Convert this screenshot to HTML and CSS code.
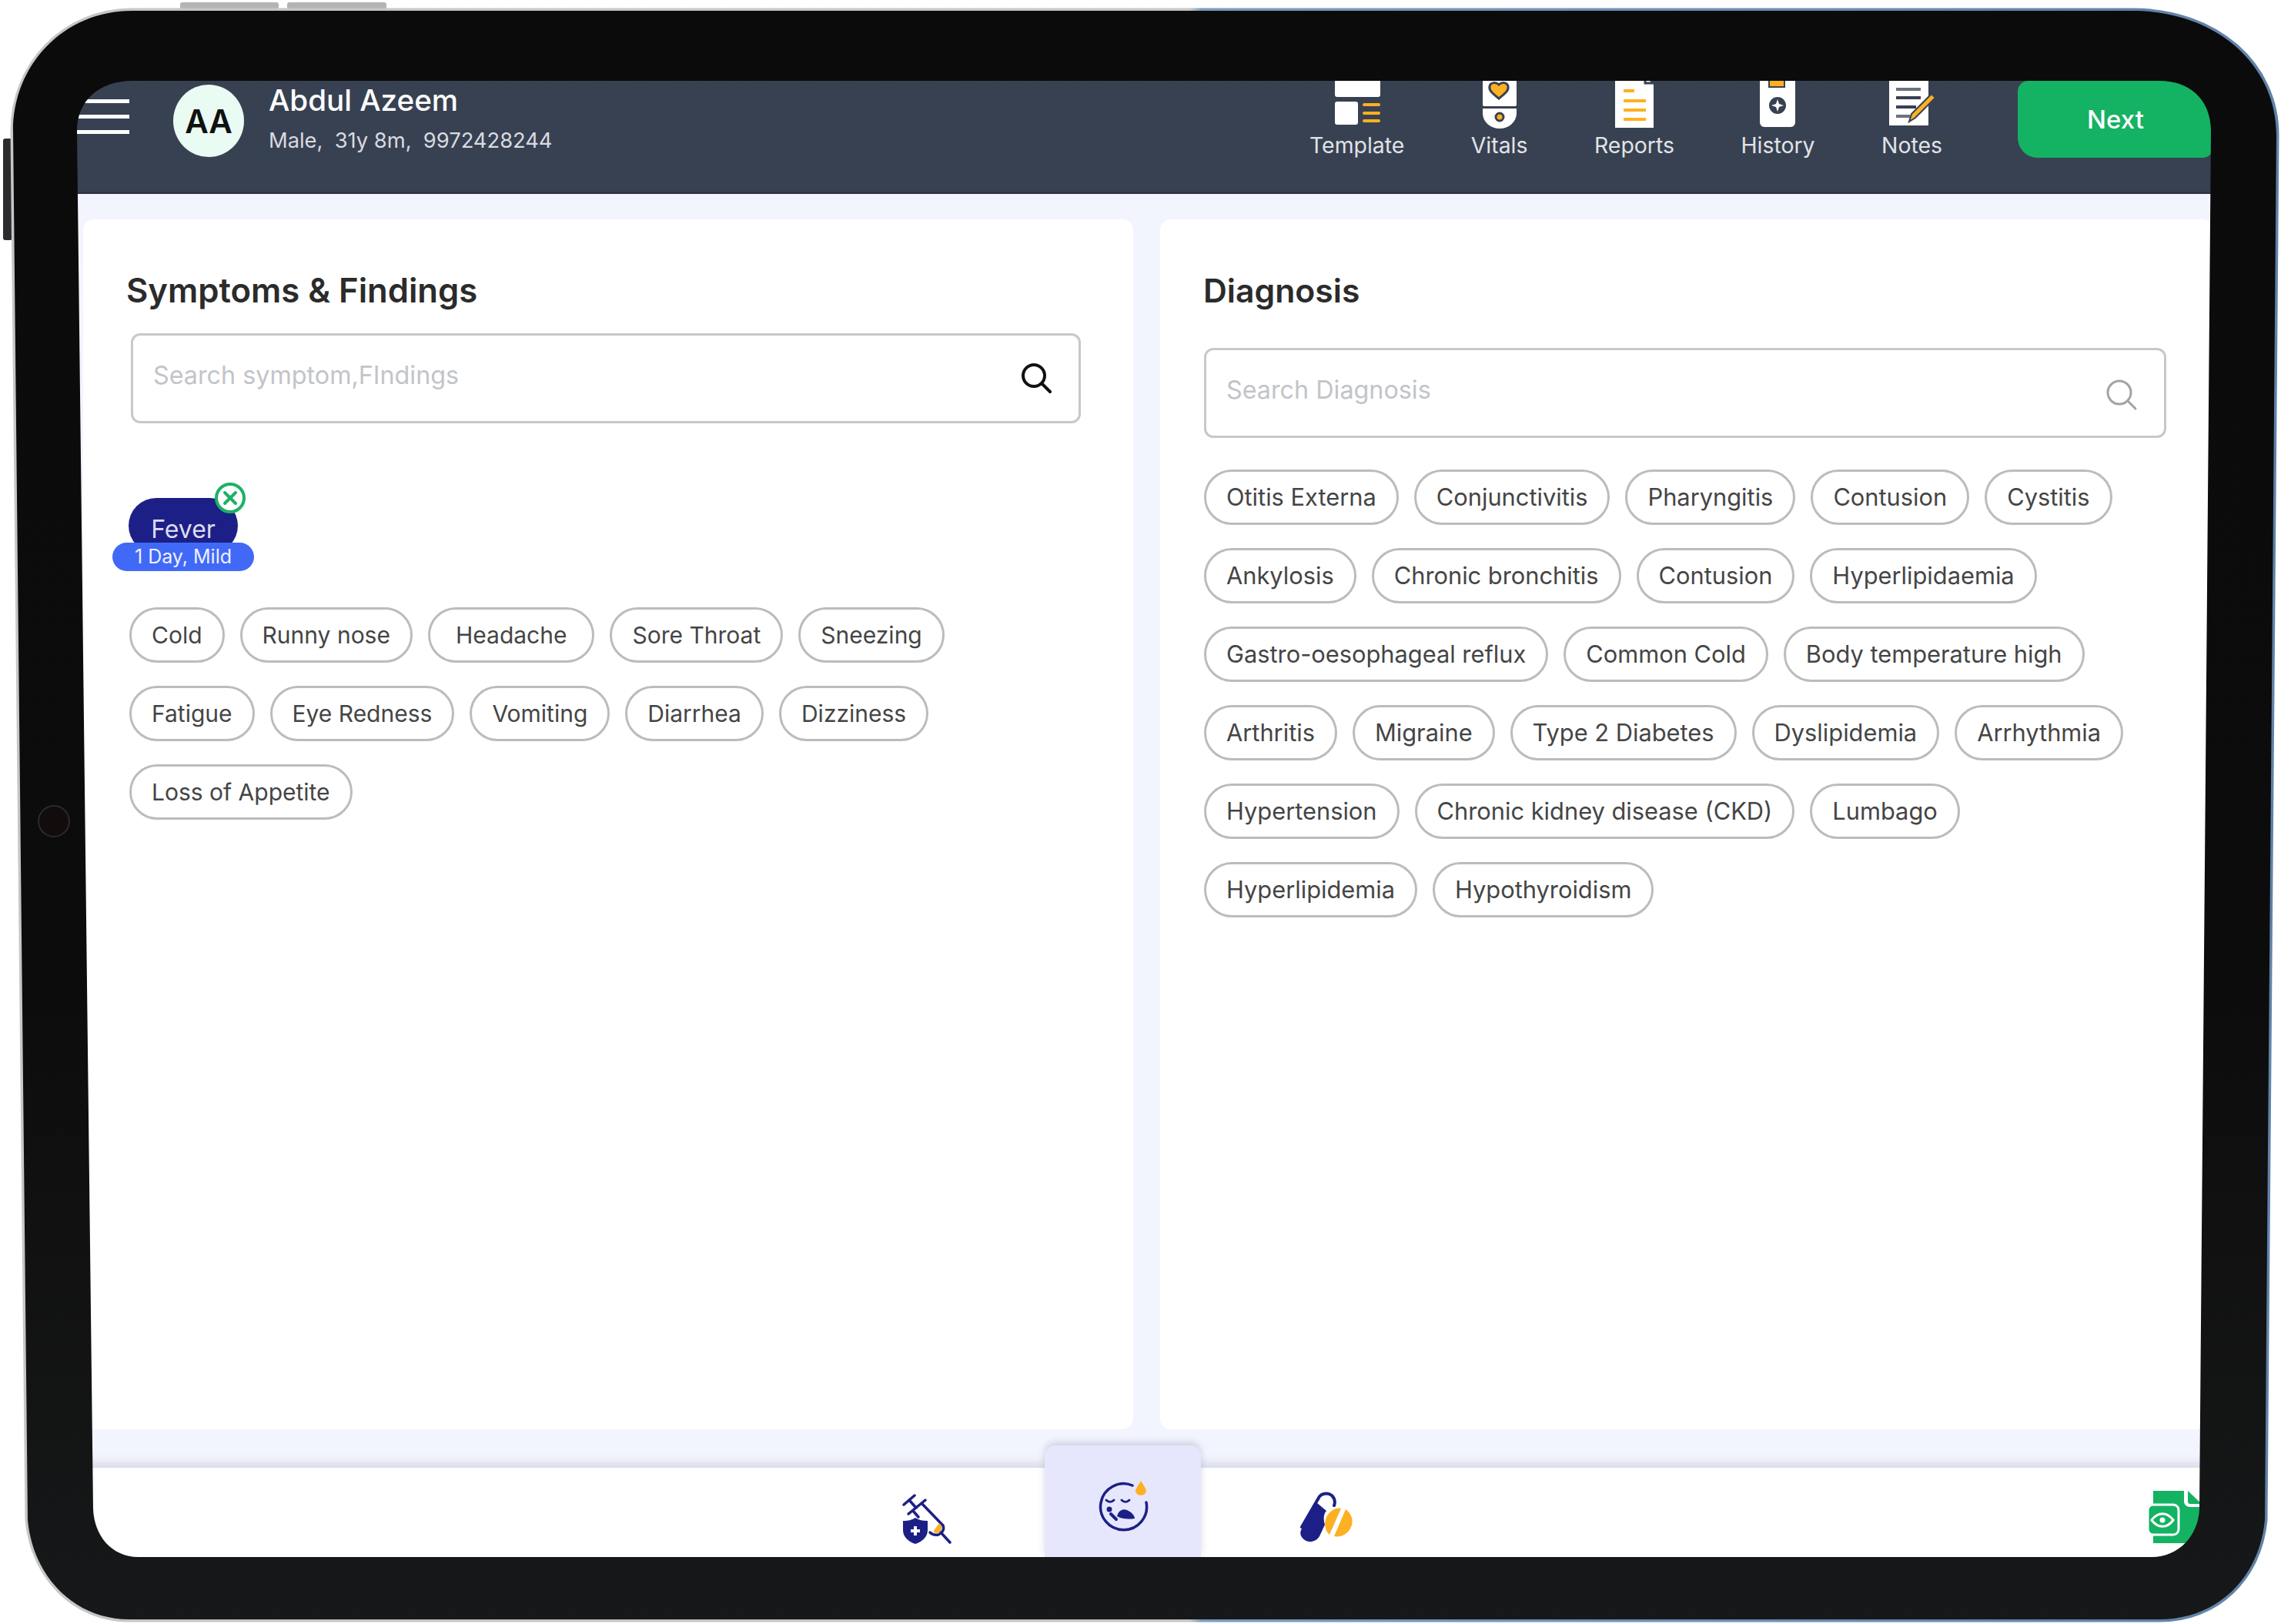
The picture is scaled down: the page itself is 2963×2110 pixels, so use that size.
FILE: index.html
```html
<!DOCTYPE html>
<html lang="en">
  <head>
    <meta charset="UTF-8" />
    <meta name="viewport" content="width=device-width, initial-scale=1.0" />
    <title>Symptoms and Diagnosis</title>
    <link rel="stylesheet" href="styles.css">
  </head>
  <body>
    <div class="device">
      <div class="screen">
        <header class="topbar">
          <div class="menu"><span></span><span></span><span></span></div>
          <div class="avatar">AA</div>
          <div class="patient">
            <div class="patient-name">Abdul Azeem</div>
            <div class="patient-info">Male,&nbsp; 31y 8m,&nbsp; 9972428244</div>
          </div>
          <nav class="tools">
            <a class="tool">
              <svg width="60" height="60" viewBox="0 0 60 60">
                <rect x="1" y="-8" width="59" height="29" rx="3" fill="#fff" />
                <rect x="1" y="27" width="30" height="30" rx="3" fill="#fff" />
                <g fill="#fdb022">
                  <rect x="37" y="29" width="23" height="4" rx="2" />
                  <rect x="37" y="40" width="23" height="4" rx="2" />
                  <rect x="37" y="50" width="23" height="4" rx="2" />
                </g>
              </svg>
              <span>Template</span>
            </a>
            <a class="tool">
              <svg width="48" height="60" viewBox="0 0 48 60">
                <path d="M2 -8H46V31a2 2 0 0 1-2 2H4a2 2 0 0 1-2-2Z" fill="#fff" />
                <path d="M2 36H46V42A22 20 0 0 1 2 42Z" fill="#fff" />
                <path d="M23 23C13 15 10 12 11 7C12 2 19 1 23 5C27 1 34 2 35 7C36 12 33 15 23 23Z" fill="#fdb022" stroke="#384152" stroke-width="3" />
                <circle cx="24" cy="47" r="5" fill="#fdb022" stroke="#384152" stroke-width="3" />
              </svg>
              <span>Vitals</span>
            </a>
            <a class="tool">
              <svg width="52" height="60" viewBox="0 0 52 60">
                <path d="M1 -8H38L51 5V61H1Z" fill="#fff" />
                <path d="M40 -8V3H51" fill="none" stroke="#384152" stroke-width="3" />
                <g fill="#fdb022">
                  <rect x="12" y="11" width="14" height="4" />
                  <rect x="12" y="24" width="29" height="4" />
                  <rect x="12" y="36" width="29" height="4" />
                  <rect x="12" y="48" width="29" height="4" />
                </g>
              </svg>
              <span>Reports</span>
            </a>
            <a class="tool">
              <svg width="48" height="60" viewBox="0 0 48 60">
                <rect x="1" y="-10" width="46" height="70" rx="6" fill="#fff" />
                <rect x="13" y="-8" width="20" height="16" fill="#fdb022" stroke="#384152" stroke-width="2" />
                <circle cx="24" cy="32" r="11" fill="#384152" />
                <path d="M24 24L26 30L32 32L26 34L24 40L22 34L16 32L22 30Z" fill="#fff" />
              </svg>
              <span>History</span>
            </a>
            <a class="tool">
              <svg width="62" height="60" viewBox="0 0 62 60">
                <path d="M1 -8H44L52 0V58H1Z" fill="#fff" />
                <g stroke="#6b7280" stroke-width="4">
                  <path d="M10 11H42" />
                  <path d="M10 22H42" stroke="#384152" />
                  <path d="M10 34H36" stroke="#384152" />
                  <path d="M10 46H28" />
                </g>
                <path d="M27 53L30 43L56 17L61 22L35 48Z" fill="#fdb022" stroke="#384152" stroke-width="2" />
              </svg>
              <span>Notes</span>
            </a>
          </nav>
          <button class="next">Next</button>
        </header>

        <main class="panels">
          <section class="card card-symptoms">
            <h2>Symptoms &amp; Findings</h2>
            <div class="search">
              <span class="placeholder">Search symptom,FIndings</span>
              <svg class="search-icon" width="42" height="42" viewBox="0 0 42 42" fill="none" stroke="#111" stroke-width="4" stroke-linecap="round">
                <circle cx="18" cy="18" r="14" />
                <path d="M29 29L39 39" />
              </svg>
            </div>
            <div class="picked">
              <div class="picked-name">Fever</div>
              <div class="picked-detail">1 Day, Mild</div>
              <svg class="picked-close" width="42" height="42" viewBox="0 0 42 42" fill="none" stroke="#1bb265" stroke-width="4">
                <circle cx="21" cy="21" r="18" fill="#fff" />
                <path d="M14 14L28 28M28 14L14 28" stroke-linecap="round" />
              </svg>
            </div>
            <div class="chips">
              <span class="chip">Cold</span>
              <span class="chip">Runny nose</span>
              <span class="chip chip-wide">Headache</span>
              <span class="chip">Sore Throat</span>
              <span class="chip">Sneezing</span>
              <span class="chip">Fatigue</span>
              <span class="chip">Eye Redness</span>
              <span class="chip">Vomiting</span>
              <span class="chip">Diarrhea</span>
              <span class="chip">Dizziness</span>
              <span class="chip">Loss of Appetite</span>
            </div>
          </section>

          <section class="card card-diagnosis">
            <h2>Diagnosis</h2>
            <div class="search">
              <span class="placeholder">Search Diagnosis</span>
              <svg class="search-icon" width="42" height="42" viewBox="0 0 42 42" fill="none" stroke="#a3a3a3" stroke-width="3" stroke-linecap="round">
                <circle cx="18" cy="18" r="15" />
                <path d="M29 29L39 39" />
              </svg>
            </div>
            <div class="chips">
              <span class="chip">Otitis Externa</span>
              <span class="chip">Conjunctivitis</span>
              <span class="chip">Pharyngitis</span>
              <span class="chip">Contusion</span>
              <span class="chip">Cystitis</span>
              <span class="chip">Ankylosis</span>
              <span class="chip">Chronic bronchitis</span>
              <span class="chip">Contusion</span>
              <span class="chip">Hyperlipidaemia</span>
              <span class="chip">Gastro-oesophageal reflux</span>
              <span class="chip">Common Cold</span>
              <span class="chip">Body temperature high</span>
              <span class="chip">Arthritis</span>
              <span class="chip">Migraine</span>
              <span class="chip">Type 2 Diabetes</span>
              <span class="chip">Dyslipidemia</span>
              <span class="chip">Arrhythmia</span>
              <span class="chip">Hypertension</span>
              <span class="chip">Chronic kidney disease (CKD)</span>
              <span class="chip">Lumbago</span>
              <span class="chip">Hyperlipidemia</span>
              <span class="chip">Hypothyroidism</span>
            </div>
          </section>
        </main>

        <footer class="tabs">
          <a class="tab">
            <svg width="64" height="66" viewBox="0 0 64 66">
              <path d="M1 35C8 35 12 34 17 31C22 34 27 35 33 35V47C33 56 26 62 17 65C8 62 1 56 1 47Z" fill="#1c2086" />
              <path d="M17 42V54M11 48H23" stroke="#fff" stroke-width="4" />
              <g fill="none" stroke="#1c2086" stroke-width="3.5" stroke-linecap="round" stroke-linejoin="round">
                <path d="M2 14L16 2" />
                <path d="M9 8L18 18" />
                <path d="M8 26L30 8" />
                <path d="M14 22L21 30" />
                <path d="M26 13L53 41C55 46 52 51 47 53C42 54 38 52 36 50" />
                <path d="M50 50L62 63" />
              </g>
              <path d="M40 49L48 38C52 41 52 46 49 49C46 52 43 51 40 49Z" fill="#fdb022" />
            </svg>
          </a>
          <a class="tab tab-active">
            <svg width="76" height="68" viewBox="0 0 76 68">
              <path d="M50 6A30 30 0 1 0 68 28" fill="none" stroke="#1c2086" stroke-width="3.5" stroke-linecap="round" />
              <path d="M61 0C65 7 68 10 68 14A7.5 7.5 0 0 1 54 14C54 10 57 7 61 0Z" fill="#fdb022" />
              <g fill="none" stroke="#1c2086" stroke-width="3" stroke-linecap="round">
                <path d="M16 25C19 28 23 28 26 25" />
                <path d="M36 25C39 28 43 28 46 25" />
                <path d="M22 43L29 50" stroke-width="4" />
              </g>
              <circle cx="20" cy="37" r="3.5" fill="#1c2086" />
              <path d="M30 46C32 38 38 36 43 38C48 40 53 45 53 49C45 50 37 50 30 46Z" fill="#1c2086" />
            </svg>
          </a>
          <a class="tab tab-pills">
            <svg width="70" height="66" viewBox="0 0 70 66">
              <path d="M2 46L24 8C27 2 36 1 41 5C46 10 45 16 44 18" fill="none" stroke="#1c2086" stroke-width="4" stroke-linecap="round" />
              <path d="M1 50L21 14L34 25C30 29 30 36 32 43L25 58C21 65 12 67 6 63C1 60 -1 55 1 50Z" fill="#1c2086" />
              <path d="M33 36C36 26 46 20 53 22L38 56C33 52 31 44 33 36Z" fill="#fdb022" />
              <path d="M59 23C66 28 70 37 66 46C62 55 53 60 44 58Z" fill="#fdb022" />
            </svg>
          </a>
          <a class="tab tab-report">
            <svg width="72" height="68" viewBox="0 0 72 68">
              <path d="M8 0H48V14C48 18 52 21 56 21H72V68H8Z" fill="#14b263" />
              <path d="M53 0L71 17H56C54 17 53 15 53 14Z" fill="#14b263" />
              <rect x="1" y="18" width="40" height="39" rx="7" fill="#14b263" stroke="#fff" stroke-width="3" />
              <path d="M6 38C14 27 26 27 34 38C26 49 14 49 6 38Z" fill="none" stroke="#fff" stroke-width="3" />
              <circle cx="20" cy="38" r="3.5" fill="#fff" />
            </svg>
          </a>
        </footer>
      </div>

      <!-- tablet frame, sits over the screen and cuts its corners -->
      <svg class="bezel" width="2963" height="2110" viewBox="0 0 2963 2110">
        <defs>
          <linearGradient id="edge" x1="0" y1="0" x2="1" y2="0">
            <stop offset="0" stop-color="#c6c6c6" />
            <stop offset="0.52" stop-color="#c6c6c6" />
            <stop offset="0.525" stop-color="#7b9dbe" />
            <stop offset="1" stop-color="#5f82a8" />
          </linearGradient>
          <linearGradient id="black" x1="0" y1="0" x2="0" y2="1">
            <stop offset="0" stop-color="#0b0b0b" />
            <stop offset="0.6" stop-color="#0c0c0c" />
            <stop offset="1" stop-color="#171819" />
          </linearGradient>
        </defs>
        <rect x="234" y="3" width="128" height="10" rx="3" fill="#b4b4b4" />
        <rect x="373" y="3" width="129" height="10" rx="3" fill="#b4b4b4" />
        <rect x="4" y="180" width="12" height="132" rx="3" fill="#2c2c2e" />
        <path d="M172 14H2770C2880 14 2957 85 2957 175L2942 1975C2935 2050 2880 2104 2805 2104H168C98 2104 43 2050 36 1975L17 170C17 85 82 14 172 14Z" fill="none" stroke="url(#edge)" stroke-width="7" />
        <path fill="url(#black)" fill-rule="evenodd" d="M172 14H2770C2880 14 2957 85 2957 175L2942 1975C2935 2050 2880 2104 2805 2104H168C98 2104 43 2050 36 1975L17 170C17 85 82 14 172 14ZM172 105C130 105 100 130 100 170L121 1960C122 1995 145 2023 180 2023H2795C2830 2023 2856 1995 2857 1960L2872 170C2872 130 2845 105 2805 105Z" />
        <circle cx="70" cy="1067" r="20" fill="#120c0c" stroke="#2a2b30" stroke-width="2" />
      </svg>
    </div>
  </body>
</html>
```

FILE: styles.css
```css
* {
  box-sizing: border-box;
}

body {
  margin: 0;
  background: #fff;
  font-family: Inter, "Liberation Sans", sans-serif;
}

.device {
  position: relative;
  width: 2963px;
  height: 2110px;
  padding: 105px 88px 87px 98px;
  overflow: hidden;
}

.bezel {
  position: absolute;
  left: 0;
  top: 0;
  pointer-events: none;
}

.screen {
  display: flex;
  flex-direction: column;
  height: 100%;
  background: #f3f5fe;
  overflow: hidden;
}

/* top bar */
.topbar {
  display: flex;
  align-items: flex-start;
  height: 147px;
  flex: none;
  background: #384152;
  border-bottom: 3px solid #2e3646;
  color: #fff;
}

.menu {
  display: flex;
  flex-direction: column;
  gap: 15px;
  width: 70px;
  margin-top: 24px;
}

.menu span {
  height: 5px;
  background: #fff;
}

.avatar {
  display: flex;
  align-items: center;
  justify-content: center;
  width: 92px;
  height: 94px;
  margin: 5px 0 0 57px;
  border-radius: 50%;
  background: #e9fbf3;
  color: #111;
  font-size: 42px;
  font-weight: 600;
}

.patient {
  margin: 2px 0 0 32px;
}

.patient-name {
  font-size: 38.6px;
  font-weight: 500;
  line-height: 46px;
}

.patient-info {
  margin-top: 10px;
  font-size: 27.3px;
  line-height: 40px;
  color: #d8dbe0;
}

.tools {
  display: flex;
  gap: 86.5px;
  margin-left: auto;
}

.tool {
  display: flex;
  flex-direction: column;
  align-items: center;
  color: #e1e3e7;
  font-size: 28.4px;
  line-height: 36px;
}

.tool svg {
  display: block;
  margin-bottom: 6px;
  overflow: visible;
}

.next {
  width: 254px;
  height: 100px;
  margin-left: 98px;
  border: 0;
  border-radius: 14px 0 14px 26px;
  background: #14b263;
  color: #fff;
  font-family: inherit;
  font-size: 33px;
  font-weight: 500;
}

/* panels */
.panels {
  display: flex;
  gap: 35px;
  flex: 1;
  min-height: 0;
  padding: 33px 0 50px 10px;
}

.card {
  padding: 65px 0 0 56px;
  background: #fff;
  border-radius: 14px;
}

.card-symptoms {
  width: 1364px;
}

.card-diagnosis {
  flex: 1;
}

.card h2 {
  margin: 0;
  color: #2b2b2b;
  font-size: 42.7px;
  font-weight: 600;
  line-height: 56px;
}

.card-symptoms h2 {
  font-size: 43.6px;
}

.search {
  display: flex;
  align-items: center;
  justify-content: space-between;
  height: 117px;
  padding: 0 34px 0 26px;
  background: #fff;
  border: 3px solid #c6c8cc;
  border-radius: 12px;
}

.card-symptoms .search {
  width: 1234px;
  margin: 27px 0 0 6px;
}

.card-diagnosis .search {
  width: 1250px;
  margin: 46px 0 0 1px;
}

.placeholder {
  margin-top: -8px;
  color: #c2c4c8;
  font-size: 32.3px;
}

.card-symptoms .search-icon {
  margin-top: -2px;
}

.card-diagnosis .search-icon {
  margin-top: 4px;
}

/* selected symptom */
.picked {
  position: relative;
  width: 142px;
  margin: 97px 0 70px 3px;
}

.picked-name {
  height: 72px;
  padding-top: 22px;
  border-radius: 36px;
  background: #1c2086;
  color: #dcdcf2;
  font-size: 32px;
  line-height: 38px;
  text-align: center;
}

.picked-detail {
  position: absolute;
  left: -21px;
  top: 58px;
  width: 184px;
  height: 37px;
  border-radius: 19px;
  background: #4169f7;
  color: #eef1ff;
  font-size: 25px;
  line-height: 37px;
  text-align: center;
}

.picked-close {
  position: absolute;
  right: -11px;
  top: -21px;
}

/* chips */
.chips {
  display: flex;
  flex-wrap: wrap;
  gap: 30px 20px;
}

.card-symptoms .chips {
  width: 1200px;
  margin-left: 4px;
  font-size: 30px;
}

.card-diagnosis .chips {
  width: 1250px;
  margin: 41px 0 0 1px;
  font-size: 30.8px;
}

.chip {
  height: 72px;
  padding: 0 26px;
  border: 3px solid #bcbcbc;
  border-radius: 36px;
  color: #454545;
  line-height: 66px;
  white-space: nowrap;
}

.chip-wide {
  padding: 0 33px;
}

/* bottom tabs */
.tabs {
  display: flex;
  align-items: flex-start;
  flex: none;
  height: 116px;
  padding-left: 1004px;
  gap: 52px;
  background: #fff;
  box-shadow: 0 -6px 12px rgba(40, 50, 90, 0.14);
}

.tab {
  display: flex;
  justify-content: center;
  width: 203px;
  padding-top: 34px;
}

.tab-active {
  height: 145px;
  margin-top: -29px;
  padding-top: 46px;
  background: #e6e7fc;
  border-radius: 14px 14px 0 0;
  box-shadow: 0 -4px 10px rgba(40, 50, 90, 0.18);
}

.tab-pills {
  margin-left: 10px;
  padding-top: 31px;
}

.tab-report {
  width: 72px;
  margin-left: auto;
  margin-right: 14px;
  padding-top: 30px;
}
```
